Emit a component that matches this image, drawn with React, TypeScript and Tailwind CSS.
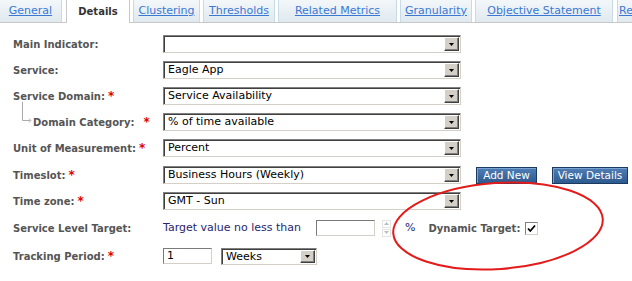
import type { ReactNode } from "react";

const tabs = [
  { label: "General", w: "w-[62px]" },
  { label: "Details", w: "w-[64px]", active: true },
  { label: "Clustering", w: "w-[67px]" },
  { label: "Thresholds", w: "w-[72px]" },
  { label: "Related Metrics", w: "w-[119px]" },
  { label: "Granularity", w: "w-[72px]" },
  { label: "Objective Statement", w: "w-[138px]" },
  { label: "Related", w: "w-[60px]" },
];

const Star = () => <span className="ml-[3px] text-[12px] font-bold text-[#e00000]">*</span>;

const Arrow = () => (
  <svg width="5" height="3" viewBox="0 0 5 3" className="block">
    <path d="M0 0h5L2.5 3z" fill="#000" />
  </svg>
);

const Select = ({ value, width }: { value?: string; width: string }) => (
  <div
    className={`${width} flex h-full items-stretch border border-t-[#808080] border-l-[#808080] border-b-[#d4d0c8] border-r-[#d4d0c8] bg-white shadow-[inset_1px_1px_0_#404040]`}
  >
    <div className="flex-1 truncate pl-[4px] pt-[1px] text-[11px] leading-[14px] text-black">{value}</div>
    <div className="my-[1px] mr-[1px] flex w-[15px] items-center justify-center border border-t-white border-l-white border-b-[#404040] border-r-[#404040] bg-[#d4d0c8] shadow-[inset_-1px_-1px_0_#808080]">
      <Arrow />
    </div>
  </div>
);

const TextBox = ({ value, width }: { value?: string; width: string }) => (
  <div
    className={`${width} h-[16px] border border-t-[#7a7a7a] border-l-[#7a7a7a] border-b-[#d4d0c8] border-r-[#d4d0c8] bg-white pl-[3px] text-[11px] leading-[14px] text-black`}
  >
    {value}
  </div>
);

const Row = ({ label, mt, children }: { label: ReactNode; mt: string; children: ReactNode }) => (
  <div className={`${mt} flex h-[18px] items-center`}>
    <div className="flex w-[150px] items-center text-[10px] font-bold text-[#555555]">{label}</div>
    <div className="flex h-full items-center">{children}</div>
  </div>
);

const BlueButton = ({ children, width }: { children: ReactNode; width: string }) => (
  <button
    className={`${width} h-[17px] border border-[#1b3a60] bg-gradient-to-b from-[#4f7fb6] to-[#2d5a8e] text-[10.5px] leading-[13px] text-white shadow-[inset_1px_1px_0_#7ba3d1]`}
  >
    {children}
  </button>
);

export default function App() {
  return (
    <div className="relative h-[281px] w-[632px] overflow-hidden bg-white font-['DejaVu_Sans',sans-serif]">
      <div className="flex h-[23px] items-stretch gap-[3px] border-b border-[#c8c8c8]">
        {tabs.map((tab, i) =>
          tab.active ? (
            <div
              key={tab.label}
              className={`${tab.w} -mb-px ml-[1px] flex shrink-0 items-center justify-center border-x border-[#c8c8c8] bg-white text-[10px] font-bold text-[#333333]`}
            >
              {tab.label}
            </div>
          ) : (
            <div
              key={tab.label}
              className={`${tab.w} ${i === 0 ? "border-r" : "border-x"} ${i === tabs.length - 1 ? "ml-[1px] justify-start pl-[1px]" : "justify-center"} flex shrink-0 items-center border-[#c6dbe5] bg-gradient-to-b from-[#f3f7fa] to-[#dfe9ef] text-[11px] text-[#3a78d4] underline`}
            >
              {tab.label}
            </div>
          ),
        )}
      </div>

      <div className="flex flex-col pl-[13px]">
        <Row label="Main Indicator:" mt="mt-[12px]">
          <Select width="w-[298px]" />
        </Row>
        <Row label="Service:" mt="mt-[8px]">
          <Select width="w-[298px]" value="Eagle App" />
        </Row>
        <Row
          label={
            <>
              Service Domain:
              <Star />
            </>
          }
          mt="mt-[8px]"
        >
          <Select width="w-[298px]" value="Service Availability" />
        </Row>
        <Row
          label={
            <>
              <svg width="20" height="18" viewBox="0 0 20 18" className="-mt-[14px] overflow-visible">
                <path d="M9.5 -4V14.5H17" stroke="#aaaaaa" strokeWidth="1" fill="none" />
                <path d="M16 12.5l2 2l-2 2" stroke="#aaaaaa" strokeWidth="1" fill="none" />
              </svg>
              Domain Category:
              <span className="ml-[6px]">
                <Star />
              </span>
            </>
          }
          mt="mt-[8px]"
        >
          <Select width="w-[298px]" value="% of time available" />
        </Row>
        <Row
          label={
            <>
              Unit of Measurement:
              <Star />
            </>
          }
          mt="mt-[8px]"
        >
          <Select width="w-[298px]" value="Percent" />
        </Row>
        <Row
          label={
            <>
              Timeslot:
              <Star />
            </>
          }
          mt="mt-[9px]"
        >
          <Select width="w-[298px]" value="Business Hours (Weekly)" />
          <div className="ml-[15px] flex gap-[15px]">
            <BlueButton width="w-[61px]">Add New</BlueButton>
            <BlueButton width="w-[76px]">View Details</BlueButton>
          </div>
        </Row>
        <Row
          label={
            <>
              Time zone:
              <Star />
            </>
          }
          mt="mt-[8px]"
        >
          <Select width="w-[298px]" value="GMT - Sun" />
        </Row>
        <Row label="Service Level Target:" mt="mt-[9px]">
          <span className="text-[11px] text-[#262670]">Target value no less than</span>
          <div className="ml-[15px]">
            <TextBox width="w-[59px]" />
          </div>
          <div className="ml-[7px] flex flex-col gap-[1px]">
            <div className="flex h-[8px] w-[9px] items-center justify-center border border-[#e4e4e4]">
              <svg width="5" height="3" viewBox="0 0 5 3">
                <path d="M0 3h5L2.5 0z" fill="#bdbdbd" />
              </svg>
            </div>
            <div className="flex h-[8px] w-[9px] items-center justify-center border border-[#e4e4e4]">
              <svg width="5" height="3" viewBox="0 0 5 3">
                <path d="M0 0h5L2.5 3z" fill="#bdbdbd" />
              </svg>
            </div>
          </div>
          <span className="ml-[14px] text-[11px] text-[#262670]">%</span>
          <span className="ml-[13px] text-[10px] font-bold text-[#555555]">Dynamic Target:</span>
          <div className="ml-[5px] flex h-[13px] w-[13px] items-center justify-center border border-t-[#808080] border-l-[#808080] border-b-[#d4d0c8] border-r-[#d4d0c8] bg-white">
            <svg width="9" height="9" viewBox="0 0 9 9">
              <path d="M1 4.5l2.3 2.5L8 1.5" stroke="#000" strokeWidth="1.8" fill="none" />
            </svg>
          </div>
        </Row>
        <Row
          label={
            <>
              Tracking Period:
              <Star />
            </>
          }
          mt="mt-[10px]"
        >
          <TextBox width="w-[49px]" value="1" />
          <div className="ml-[9px] h-[17px]">
            <Select width="w-[96px]" value="Weeks" />
          </div>
        </Row>
      </div>

      <svg className="pointer-events-none absolute inset-0" width="632" height="281" viewBox="0 0 632 281">
        <ellipse
          cx="498"
          cy="226"
          rx="105"
          ry="43"
          transform="rotate(-4 498 226)"
          fill="none"
          stroke="#e41b1b"
          strokeWidth="2"
        />
      </svg>
    </div>
  );
}
